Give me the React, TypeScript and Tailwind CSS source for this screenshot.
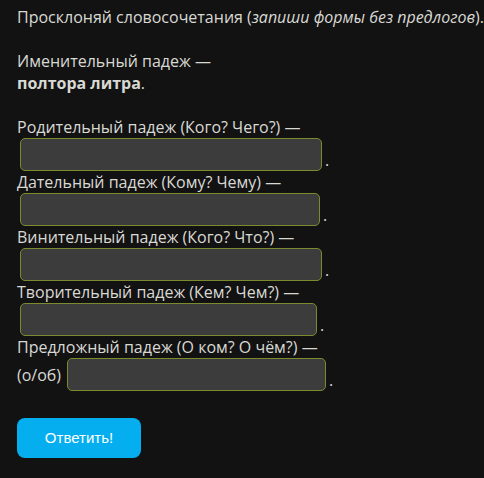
import React from 'react';

interface FieldProps {
  label: string;
  width: string;
  prefix?: string;
}

const Field = ({ label, width, prefix }: FieldProps): JSX.Element => (
  <div className="flex flex-col">
    <span className="leading-[22px]">{label}</span>
    <div className="flex items-end">
      {prefix && <span className="mr-[3px] self-center leading-[22px]">{prefix}</span>}
      <input
        type="text"
        className={`ml-[3px] h-[33px] ${width} rounded-[5px] border border-[#7b8a2c] bg-[#3c3c3c] outline-none`}
      />
      <span className="ml-[3px] leading-[22px]">.</span>
    </div>
  </div>
);

export default function App(): JSX.Element {
  return (
    <div className="min-h-[478px] w-[484px] bg-[#121212] px-[17px] pt-[6px] font-['Open_Sans',sans-serif] text-[16px] text-[#d9d9d4]">
      <p className="leading-[22px] whitespace-nowrap">
        Просклоняй словосочетания (<i>запиши формы без предлогов</i>).
      </p>
      <p className="mt-[22px] leading-[22px]">
        Именительный падеж —<br />
        <strong>полтора литра</strong>.
      </p>
      <div className="mt-[22px] flex flex-col">
        <Field label="Родительный падеж (Кого? Чего?) —" width="w-[302px]" />
        <Field label="Дательный падеж (Кому? Чему) —" width="w-[300px]" />
        <Field label="Винительный падеж (Кого? Что?) —" width="w-[302px]" />
        <Field label="Творительный падеж (Кем? Чем?) —" width="w-[297px]" />
        <Field label="Предложный падеж (О ком? О чём?) —" width="w-[259px]" prefix="(о/об)" />
      </div>
      <button className="mt-[27px] h-[40px] w-[124px] rounded-[8px] bg-[#05aeef] font-['Liberation_Sans',sans-serif] text-[15px] text-white">
        Ответить!
      </button>
    </div>
  );
}
